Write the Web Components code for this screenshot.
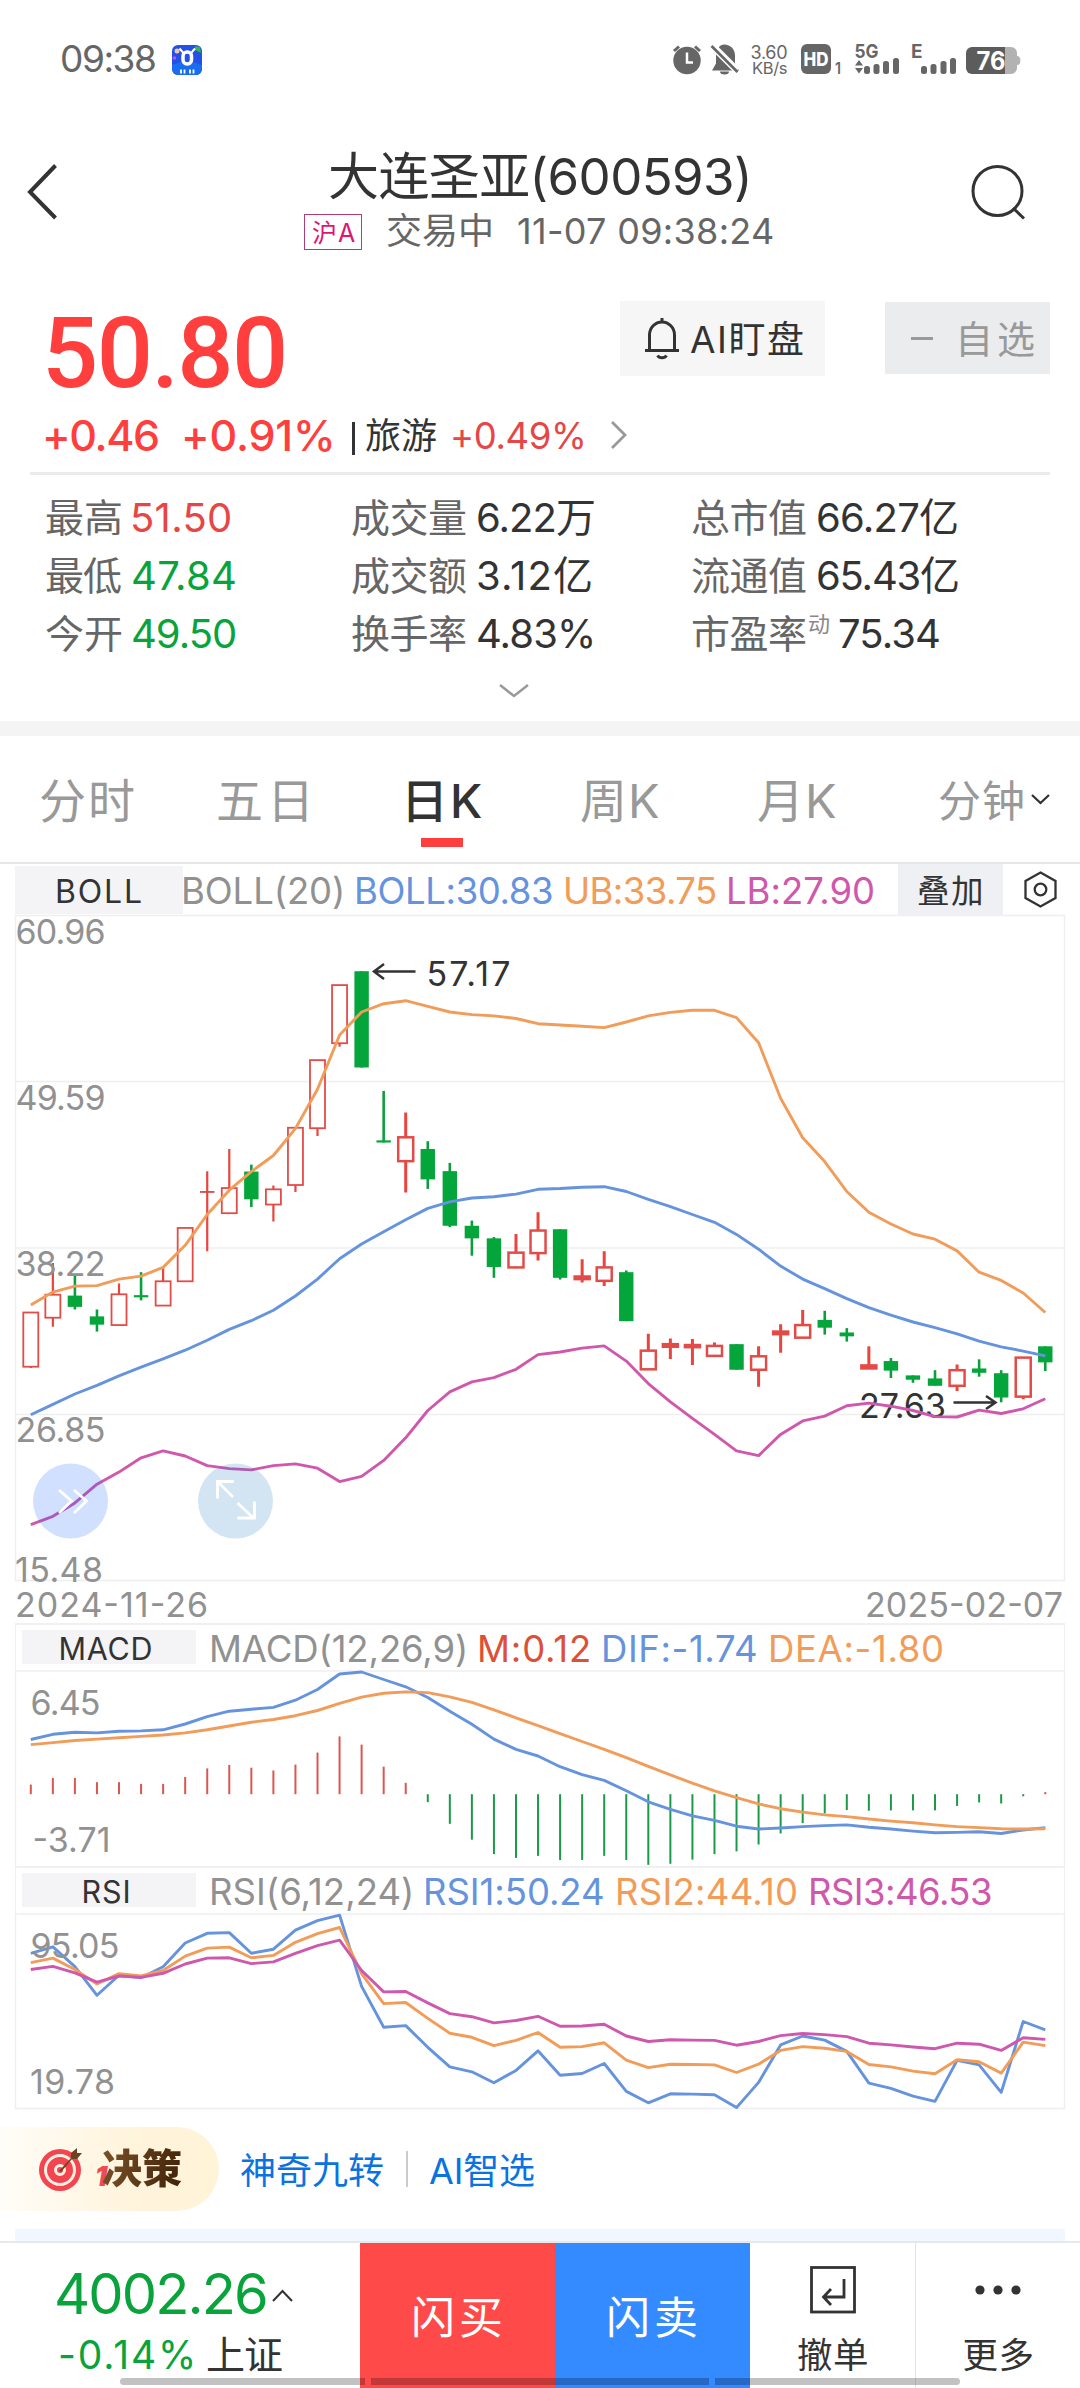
<!DOCTYPE html>
<html lang="zh-CN">
<head>
  <meta charset="UTF-8">
  <title>大连圣亚(600593)</title>
  <style>
    :root {
      --text: #333;
      --text-secondary: #666;
      --text-muted: #919191;
      --up: #ff3e3e;
      --down: #09a33c;
      --blue: #6593dd;
      --orange: #f19c59;
      --pink: #cf58ad;
    }

    body {
      margin: 0;
      width: 1080px;
      height: 2388px;
      overflow: hidden;
      background: #fff;
      color: var(--text);
      font-family: Inter, "Noto Sans CJK SC", sans-serif;
    }
  </style>
</head>
<body>
  <status-bar></status-bar>
  <stock-header></stock-header>
  <quote-summary></quote-summary>
  <quote-stats></quote-stats>
  <period-tabs></period-tabs>
  <boll-legend></boll-legend>
  <kline-chart></kline-chart>
  <indicator-header name="MACD" name-width="91">
    <fit-text w="253" size="36.5" style="color: var(--text-muted)">MACD(12,26,9)</fit-text>
    <fit-text w="109" size="36.5" style="color: #dd5038">M:0.12</fit-text>
    <fit-text w="152" size="36.5" style="color: var(--blue)">DIF:-1.74</fit-text>
    <fit-text w="171" size="36.5" style="color: var(--orange)">DEA:-1.80</fit-text>
  </indicator-header>
  <macd-chart></macd-chart>
  <indicator-header name="RSI" name-width="45">
    <fit-text w="199" size="36.5" style="color: var(--text-muted)">RSI(6,12,24)</fit-text>
    <fit-text w="177" size="36.5" style="color: var(--blue)">RSI1:50.24</fit-text>
    <fit-text w="178" size="36.5" style="color: var(--orange)">RSI2:44.10</fit-text>
    <fit-text w="180" size="36.5" style="color: var(--pink)">RSI3:46.53</fit-text>
  </indicator-header>
  <rsi-chart></rsi-chart>
  <decision-strip></decision-strip>
  <trade-bar></trade-bar>

  <script>
    const measure = document.createElement('canvas').getContext('2d');

    // Text whose glyphs fill exactly `w` pixels
    class FitText extends HTMLElement {
      constructor() {
        super();
        this.attachShadow({ mode: 'open' });
        this.shadowRoot.innerHTML = `
          <style>
            :host { display: block; flex: none; white-space: nowrap; line-height: 1.2; }
          </style>
          <slot></slot>
        `;
      }

      connectedCallback() {
        const text = this.textContent;
        const width = Number(this.getAttribute('w'));
        const size = this.getAttribute('size');
        const weight = this.getAttribute('weight') || 400;
        const family = `${this.getAttribute('font') || 'Inter'}, "Noto Sans CJK SC", sans-serif`;
        measure.font = `${weight} ${size}px ${family}`;
        const box = measure.measureText(text);
        const ink = box.actualBoundingBoxLeft + box.actualBoundingBoxRight;
        const count = [...text].length - 1;
        this.style.fontFamily = family;
        this.style.fontSize = `${size}px`;
        this.style.fontWeight = weight;
        this.style.width = `${width}px`;
        this.style.textIndent = `${box.actualBoundingBoxLeft}px`;
        if (count > 0) this.style.letterSpacing = `${(width - ink) / count}px`;
      }
    }

    class StatusBar extends HTMLElement {
      constructor() {
        super();
        this.attachShadow({ mode: 'open' });
        this.shadowRoot.innerHTML = `
          <style>
            :host { display: flex; align-items: center; height: 119px; color: var(--text-secondary); }
            .time { margin-left: 62px; }
            .app { margin-left: 17px; }
            .icons { margin-left: 458px; }
          </style>
          <fit-text class="time" w="93" size="37">09:38</fit-text>
          <svg class="app" width="30" height="30" viewBox="0 0 30 30">
            <rect width="30" height="30" rx="6" fill="#2450e8"/>
            <path d="M0 20Q15 13 30 20V24A6 6 0 0 1 24 30H6A6 6 0 0 1 0 24Z" fill="#1b6df0"/>
            <circle cx="5" cy="6" r="2.5" fill="#e8c9b0"/>
            <circle cx="2.5" cy="13" r="1.8" fill="#c155e0"/>
            <path d="M23 1l5 1 1 6-6-3z" fill="#35b44a"/>
            <rect x="11" y="7" width="8.5" height="12" rx="4" fill="none" stroke="#fff" stroke-width="3.5"/>
            <path d="M7.500 3.500l3.500 4M23 3.500l-3.500 4" stroke="#fff" stroke-width="2"/>
            <path d="M9 24.500v4M12.500 24.500v4M18 24.500v4M21.500 24.500v4" stroke="#fff" stroke-width="1.800"/>
          </svg>
          <svg class="icons" width="370" height="60" viewBox="0 0 370 60" fill="#666" font-family='Inter'>
            <circle cx="27" cy="30.500" r="13.700"/>
            <path d="M14 21l5-4.500M40 21l-5-4.500" stroke="#666" stroke-width="3"/>
            <path d="M27 22.500v10h6" fill="none" stroke="#fff" stroke-width="2.500"/>
            <path d="M64 14.500c7 0 11 5 11 11v8l4 7h-27l4-7v-9c1-6 4-10 8-10zM60 41.500h9a4.500 3 0 0 1-9 0z"/>
            <path d="M50 13.500l27 27" stroke="#fff" stroke-width="7"/>
            <path d="M51.500 16l26 26" stroke="#666" stroke-width="2.600"/>
            <text x="90.500" y="28.500" font-size="18" textLength="37">3.60</text>
            <text x="92" y="44.300" font-size="16.500" textLength="35.500">KB/s</text>
            <rect x="141" y="14" width="30" height="30" rx="6"/>
            <text x="143.500" y="36" font-size="18.500" font-weight="800" textLength="25" lengthAdjust="spacingAndGlyphs" fill="#fff">HD</text>
            <text x="175" y="43.500" font-size="16" font-weight="600" textLength="6" lengthAdjust="spacingAndGlyphs">1</text>
            <text x="194.500" y="28" font-size="19" font-weight="700" textLength="24" lengthAdjust="spacingAndGlyphs">5G</text>
            <path d="M195 35.500l4-5.500 4 5.500zM195 38l4 5.500 4-5.500z"/>
            <rect x="204" y="36" width="6" height="8" rx="2.500"/>
            <rect x="213.500" y="34" width="6" height="10" rx="2.500"/>
            <rect x="223" y="31" width="6" height="13" rx="2.500"/>
            <rect x="233" y="28" width="6" height="16" rx="2.500"/>
            <text x="251" y="28" font-size="19" font-weight="700">E</text>
            <rect x="261" y="36" width="6" height="8" rx="2.500"/>
            <rect x="270.500" y="34" width="6" height="10" rx="2.500"/>
            <rect x="280.500" y="31" width="6" height="13" rx="2.500"/>
            <rect x="290" y="28" width="6" height="16" rx="2.500"/>
            <path d="M345 17h6a6 6 0 0 1 6 6v3a3 4 0 0 1 0 9v3a6 6 0 0 1-6 6h-6z" fill="#b2b2b2"/>
            <path d="M345 17h-33a6 6 0 0 0-6 6v15a6 6 0 0 0 6 6h33z" fill="#5c5c5c"/>
            <text x="316.500" y="40" font-size="25" font-weight="700" textLength="29" lengthAdjust="spacingAndGlyphs" fill="#fff">76</text>
          </svg>
        `;
      }
    }

    class StockHeader extends HTMLElement {
      constructor() {
        super();
        this.attachShadow({ mode: 'open' });
        this.shadowRoot.innerHTML = `
          <style>
            :host { display: flex; height: 161px; }
            svg { flex: none; fill: none; stroke: var(--text); }
            .center { width: 480px; padding-top: 25px; }
            .title, .sub { display: flex; align-items: center; }
            .title { height: 65px; padding-left: 30px; }
            .sub { height: 45px; padding-left: 4px; color: var(--text-secondary); }
            .badge {
              box-sizing: border-box;
              width: 58px;
              height: 36px;
              border: 1.5px solid #b23a78;
              padding: 3px 0 0 7px;
              display: flex;
              align-items: center;
              color: #dc1673;
            }
          </style>
          <svg width="300" height="161"><path d="M55.500 46.500L30 73l25.500 26" stroke-width="4"/></svg>
          <div class="center">
            <div class="title"><fit-text w="418" size="51">大连圣亚(600593)</fit-text></div>
            <div class="sub">
              <div class="badge"><fit-text w="43" size="25">沪A</fit-text></div>
              <fit-text w="104" size="36" style="margin-left: 25px">交易中</fit-text>
              <fit-text w="255" size="36" style="margin-left: 27px">11-07 09:38:24</fit-text>
            </div>
          </div>
          <svg width="300" height="161" stroke-width="3"><circle cx="217.500" cy="72" r="24.500"/><path d="M233 89l11 10.500"/></svg>
        `;
      }
    }

    class QuoteSummary extends HTMLElement {
      constructor() {
        super();
        this.attachShadow({ mode: 'open' });
        this.shadowRoot.innerHTML = `
          <style>
            :host { display: block; }
            .top { display: flex; height: 115px; align-items: flex-start; }
            .price { margin: 36.5px 0 0 48px; line-height: 72px; color: var(--up); }
            .btn { display: flex; align-items: center; box-sizing: border-box; }
            .watch { margin: 21px 0 0 336px; width: 205px; height: 75px; background: #f6f6f6; padding-left: 25px; }
            .fav { margin: 22px 0 0 60px; width: 165px; height: 72px; background: #ebecee; padding-left: 26px; color: #999; }
            .fav i { width: 22px; height: 3px; background: #999; margin-right: 28px; }
            .change {
              box-sizing: border-box;
              display: flex;
              align-items: center;
              height: 80px;
              margin: 0 30px;
              padding: 4px 0 0 16px;
              border-bottom: 3px solid #e9ebee;
              color: var(--up);
            }
            .bar { width: 2.5px; height: 33px; background: var(--text); margin: 5px 11.5px 0 20px; }
          </style>
          <div class="top">
            <fit-text class="price" w="236" size="99" weight="500" font="Roboto">50.80</fit-text>
            <div class="btn watch">
              <svg width="34" height="42" viewBox="0 0 34 42" fill="none" stroke="#333" stroke-width="3">
                <path d="M17 0v4M4.500 31.500V17a12.500 13 0 0 1 25 0v14.500M0 32.500h34"/>
                <path d="M12.500 37.500a5 4 0 0 0 9 0"/>
              </svg>
              <fit-text w="113" size="37" style="margin: 3px 0 0 11px">AI盯盘</fit-text>
            </div>
            <div class="btn fav"><i></i><fit-text w="73" size="38" style="margin-top: 3px">自选</fit-text></div>
          </div>
          <div class="change">
            <fit-text w="112" size="43" weight="500">+0.46</fit-text>
            <fit-text w="147" size="43" weight="500" style="margin-left: 27px">+0.91%</fit-text>
            <div class="bar"></div>
            <fit-text w="70" size="36" style="margin-top: 2px; color: var(--text)">旅游</fit-text>
            <fit-text w="130" size="36.5" style="margin: 3px 0 0 17px; color: #e64646">+0.49%</fit-text>
            <svg width="17" height="28" style="margin: -2px 0 0 27px" fill="none" stroke="#999" stroke-width="2.800"><path d="M2 1l13 13L2 27"/></svg>
          </div>
        `;
      }
    }

    class QuoteStats extends HTMLElement {
      constructor() {
        super();
        this.attachShadow({ mode: 'open' });
        const rows = [
          ['最高', 75, '51.50', 97, '#e64646'], ['成交量', 114, '6.22万', 116], ['总市值', 114, '66.27亿', 139],
          ['最低', 75, '47.84', 102, '#09a33c'], ['成交额', 114, '3.12亿', 113], ['流通值', 114, '65.43亿', 140],
          ['今开', 75, '49.50', 102, '#09a33c'], ['换手率', 114, '4.83%', 114], ['市盈率', 114, '75.34', 100]
        ];
        this.shadowRoot.innerHTML = `
          <style>
            :host { box-sizing: border-box; display: block; height: 261px; border-bottom: 15px solid #f4f4f4; }
            .grid { display: grid; grid-template: repeat(3, 58px) / 306px 340px 1fr; padding: 14px 0 0 46px; }
            .cell { display: flex; align-items: center; }
            .label { color: var(--text-secondary); margin: 1px 12px 0 0; }
            .mark { color: #888; margin: -20px 9px 0 -9px; }
            .more { display: block; margin: 21px 0 0 499px; }
          </style>
          <div class="grid">
            ${rows.map(([label, lw, value, vw, color = '#333']) => `
              <div class="cell">
                <fit-text class="label" w="${lw}" size="39">${label}</fit-text>
                ${label === '市盈率' ? '<fit-text class="mark" w="21" size="22">动</fit-text>' : ''}
                <fit-text w="${vw}" size="40" style="color: ${color}">${value}</fit-text>
              </div>`).join('')}
          </div>
          <svg class="more" width="30" height="14" fill="none" stroke="#999" stroke-width="2.500"><path d="M1 1l14 11L29 1"/></svg>
        `;
      }
    }

    class PeriodTabs extends HTMLElement {
      constructor() {
        super();
        this.attachShadow({ mode: 'open' });
        this.shadowRoot.innerHTML = `
          <style>
            :host {
              box-sizing: border-box;
              display: flex;
              height: 128px;
              padding: 41px 0 0 41px;
              border-bottom: 2px solid #e6e6e6;
              color: #999;
            }
            fit-text { line-height: 48px; }
            .active { color: var(--text); }
            .active i { display: block; width: 42px; height: 9px; margin: 13px 0 0 13px; background: var(--up); }
            svg { margin: 17px 0 0 7px; }
          </style>
          <fit-text w="93" size="47">分时</fit-text>
          <fit-text w="89" size="47" style="margin-left: 84px">五日</fit-text>
          <div class="active" style="margin-left: 101px"><fit-text w="74" size="47" weight="500">日K</fit-text><i></i></div>
          <fit-text w="78" size="47" style="margin-left: 99px">周K</fit-text>
          <fit-text w="78" size="47" style="margin-left: 99px">月K</fit-text>
          <fit-text w="84" size="43" style="margin-left: 103px">分钟</fit-text>
          <svg width="21" height="12" fill="none" stroke="#333" stroke-width="2.300"><path d="M2 1l8.500 8L19 1"/></svg>
        `;
      }
    }

    class BollLegend extends HTMLElement {
      constructor() {
        super();
        this.attachShadow({ mode: 'open' });
        this.shadowRoot.innerHTML = `
          <style>
            :host { display: flex; height: 51px; align-items: center; padding-left: 15px; }
            .name, .overlay { display: flex; align-items: center; box-sizing: border-box; }
            .name { width: 168px; height: 48px; padding: 6px 0 0 42px; background: #f4f4f7; }
            .overlay { width: 105px; height: 51px; padding: 3px 0 0 20px; margin: 0 21px 0 25px; background: #eff0f3; }
            :host > fit-text { margin-top: 5px; }
          </style>
          <div class="name"><fit-text w="84" size="32">BOLL</fit-text></div>
          <fit-text w="158" size="36.5" style="margin-left: 1px; color: var(--text-muted)">BOLL(20)</fit-text>
          <fit-text w="195" size="36.5" style="margin-left: 15px; color: var(--blue)">BOLL:30.83</fit-text>
          <fit-text w="149" size="36.5" style="margin-left: 14px; color: var(--orange)">UB:33.75</fit-text>
          <fit-text w="144" size="36.5" style="margin-left: 14px; color: var(--pink)">LB:27.90</fit-text>
          <div class="overlay"><fit-text w="63" size="32.5">叠加</fit-text></div>
          <svg width="33" height="37" viewBox="0 0 33 37" fill="none" stroke="#333" stroke-width="2.300">
            <path d="M16.500 1.500L31.500 10v17L16.500 35.500 1.500 27V10z"/><circle cx="16.500" cy="18.500" r="5.800"/>
          </svg>
        `;
        this.shadowRoot.querySelectorAll(':host > fit-text').forEach((el) => { el.style.marginTop = '5px'; });
      }
    }

    class IndicatorHeader extends HTMLElement {
      constructor() {
        super();
        this.attachShadow({ mode: 'open' });
      }

      connectedCallback() {
        this.shadowRoot.innerHTML = `
          <style>
            :host {
              box-sizing: border-box;
              display: flex;
              align-items: center;
              height: 48px;
              margin: 0 15px;
              padding-left: 6px;
              gap: 15px;
              border: solid #f0f0f2;
              border-width: 2px 1px 0;
            }
            .name {
              display: flex;
              justify-content: center;
              align-items: center;
              box-sizing: border-box;
              width: 174px;
              height: 34px;
              padding: 4px 6px 0 0;
              margin: 0 1px 2px 0;
              background: #f4f4f7;
            }
            ::slotted(fit-text) { margin-top: 4px; }
          </style>
          <div class="name"><fit-text w="${this.getAttribute('name-width')}" size="30.5">${this.getAttribute('name')}</fit-text></div>
          <slot></slot>
        `;
      }
    }

    // 47 trading days, one slot each
    const dayX = (i) => 30.8 + 22.054 * i;

    const polyline = (values, color, toY) => {
      const points = values.map((v, i) => `${dayX(i).toFixed(1)},${toY(v).toFixed(1)}`).join(' ');
      return `<polyline points="${points}" fill="none" stroke="${color}" stroke-width="2.9" stroke-linejoin="round"/>`;
    };

    const svgText = (x, y, length, text, color = '#919191', size = 34) =>
      `<text x="${x}" y="${y}" font-size="${size}" textLength="${length}" fill="${color}">${text}</text>`;

    const CHART_STYLE = `
      <style>
        :host { display: block; }
        svg { display: block; overflow: visible; font-family: Inter, sans-serif; }
      </style>`;

    // [direction, body top, body bottom, high, low]
    const CANDLES = [
      ['r', 859, 984, 859, 987], ['r', 818, 871, 745, 892], ['g', 820, 846, 772, 852], ['g', 868, 887, 852, 903],
      ['r', 817, 888, 792, 888], ['g', 819, 824, 766, 831], ['r', 787, 843, 756, 843], ['r', 664, 787, 664, 787],
      ['r', 581, 581, 533, 718], ['r', 572, 630, 482, 630], ['g', 534, 598, 518, 616], ['r', 575, 610, 566, 649],
      ['r', 433, 565, 433, 581], ['r', 277, 434, 277, 452], ['r', 104, 238, 104, 246], ['g', 72, 294, 72, 294],
      ['g', 462, 467, 348, 467], ['r', 455, 510, 398, 582], ['g', 482, 552, 464, 574], ['g', 533, 659, 514, 662],
      ['g', 659, 688, 647, 728], ['g', 688, 754, 685, 779], ['r', 721, 755, 678, 757], ['r', 670, 722, 628, 739],
      ['g', 667, 779, 667, 783], ['r', 776, 782, 736, 790], ['r', 755, 786, 718, 798], ['g', 766, 879, 762, 879],
      ['r', 947, 990, 908, 990], ['r', 932, 938, 919, 966], ['r', 934, 939, 920, 980], ['r', 936, 959, 928, 959],
      ['g', 932, 991, 932, 991], ['r', 960, 991, 937, 1030], ['r', 903, 909, 886, 952], ['r', 888, 917, 853, 917],
      ['g', 876, 894, 855, 910], ['g', 905, 914, 895, 926], ['r', 981, 988, 937, 988], ['g', 971, 993, 964, 1010],
      ['g', 1004, 1014, 1004, 1021], ['g', 1011, 1028, 992, 1028], ['r', 992, 1028, 979, 1040], ['g', 988, 998, 967, 1007],
      ['g', 999, 1055, 992, 1066], ['r', 963, 1053, 963, 1059], ['g', 937, 974, 937, 994]
    ];
    const UPPER = [842, 812, 798, 797, 782, 775, 755, 704, 633, 577, 534, 497, 435, 344, 219, 166, 147, 140, 153, 166, 172, 175, 181, 193, 196, 199, 202, 189, 175, 167, 162, 162, 179, 237, 365, 456, 511, 580, 628, 655, 678, 690, 717, 766, 785, 814, 859];
    const MIDDLE = [1095, 1071, 1047, 1027, 1005, 985, 966, 946, 923, 898, 878, 854, 821, 782, 735, 701, 673, 645, 619, 604, 595, 592, 586, 575, 573, 570, 569, 580, 598, 615, 633, 651, 679, 713, 752, 782, 804, 827, 848, 865, 881, 894, 908, 925, 938, 948, 959];
    const LOWER = [1348, 1329, 1298, 1255, 1227, 1194, 1178, 1190, 1212, 1219, 1222, 1212, 1208, 1218, 1249, 1237, 1200, 1148, 1085, 1042, 1019, 1009, 990, 956, 950, 941, 936, 971, 1023, 1065, 1103, 1140, 1178, 1189, 1140, 1109, 1098, 1074, 1068, 1075, 1085, 1099, 1100, 1084, 1092, 1081, 1058];

    class KlineChart extends HTMLElement {
      constructor() {
        super();
        this.attachShadow({ mode: 'open' });
        const toY = (v) => v / 2.306 + 25;
        const candles = CANDLES.map(([dir, top, bottom, high, low], i) => {
          const x = dayX(i);
          const [t, b, h, l] = [top, bottom, high, low].map(toY);
          if (dir === 'g') {
            return `<path d="M${x} ${h}V${l}" stroke="#0a9f3d" stroke-width="2.600"/>
              <rect x="${x - 7.2}" y="${t}" width="14.400" height="${b - t}" fill="#04a53a"/>`;
          }
          const width = i < 16 ? 1.8 : 2.5;
          const line = `<path d="M${x} ${h}V${t}M${x} ${b}V${l}" stroke="#e8453f" stroke-width="${i < 16 ? 2.2 : 3}"/>`;
          if (t === b) return `${line}<path d="M${x - 7.2} ${t}h14.400" stroke="#c94f4b" stroke-width="1.800"/>`;
          return `${line}<rect x="${x - 7.5}" y="${t}" width="15" height="${b - t}" fill="${b - t < 4 ? '#ff3e3e' : '#fff'}" stroke="#e24c48" stroke-width="${width}"/>`;
        }).join('');

        this.shadowRoot.innerHTML = `
          ${CHART_STYLE}
          <svg width="1080" height="708">
            <path d="M15.500 .5H1064.500V665.500H15.500zM15 166.500H1064M15 333H1064M15 499.500H1064" fill="none" stroke="#efeff1" stroke-width="1.500"/>
            ${candles}
            ${svgText(859, 502.5, 87, '27.63', '#333')}
            <path d="M953.500 487.500H995M986 481l9.500 6.500-9.500 6.500" fill="none" stroke="#333" stroke-width="2.500"/>
            ${polyline(UPPER, '#f19c59', toY)}
            ${polyline(MIDDLE, '#6593dd', toY)}
            ${polyline(LOWER, '#cf58ad', toY)}
            ${svgText(426.5, 70.5, 84, '57.17', '#333')}
            <path d="M415.500 56.500H375M384 49l-10 7.500 10 7.500" fill="none" stroke="#333" stroke-width="2.500"/>
            ${svgText(15.5, 28.5, 90, '60.96')}
            ${svgText(15.5, 194.5, 90, '49.59')}
            ${svgText(15.5, 361, 90, '38.22')}
            ${svgText(15.5, 527, 90, '26.85')}
            ${svgText(15, 667, 88, '15.48')}
            ${svgText(15, 701.5, 193, '2024-11-26')}
            ${svgText(865, 701.5, 198, '2025-02-07')}
            <circle cx="70.500" cy="586" r="37.500" fill="rgba(25, 100, 255, .2)"/>
            <circle cx="235.500" cy="586" r="37.500" fill="rgba(35, 120, 195, .2)"/>
            <g fill="none" stroke="#fff" stroke-width="2.800">
              <path d="M59 575l12.500 11L59 598M74 575l12.500 11L74 598"/>
              <path d="M233 582l-15.500-15.500M217.500 583.500v-17h16.500M237.500 588l16 15M254.500 586.500v16.500h-17"/>
            </g>
          </svg>
        `;
      }
    }

    const MACD_BARS = [536, 517, 517, 529, 529, 534, 534, 514, 489, 479, 487, 495, 478, 443, 396, 420, 484, 531, 587, 650, 696, 738, 749, 743, 755, 755, 743, 755, 769, 766, 754, 738, 730, 710, 678, 648, 620, 610, 612, 611, 611, 611, 598, 588, 591, 570, 558];
    const DIF = [405, 390, 384, 386, 381, 380, 377, 360, 339, 323, 317, 312, 291, 260, 215, 209, 231, 252, 283, 323, 361, 404, 434, 453, 484, 507, 524, 554, 586, 608, 627, 640, 657, 665, 662, 658, 655, 653, 660, 665, 671, 676, 675, 673, 678, 668, 661];
    const DEA = [420, 414, 408, 404, 400, 396, 392, 386, 377, 366, 355, 347, 336, 321, 300, 282, 271, 267, 269, 281, 297, 319, 342, 365, 388, 411, 434, 458, 483, 508, 532, 554, 574, 592, 606, 616, 624, 629, 636, 642, 647, 653, 658, 661, 664, 665, 664];

    class MacdChart extends HTMLElement {
      constructor() {
        super();
        this.attachShadow({ mode: 'open' });
        const toY = (v) => v / 2.904 - 71;
        const bars = MACD_BARS.map((v, i) =>
          `<path d="M${dayX(i)} ${toY(564)}V${toY(v)}" stroke="${v < 564 ? '#dc5550' : '#1a9a48'}" stroke-width="2"/>`).join('');
        this.shadowRoot.innerHTML = `
          ${CHART_STYLE}
          <svg width="1080" height="195">
            <path d="M15.500 195V0M1064.500 0V195M15 0H1064" fill="none" stroke="#efeff1" stroke-width="1.500"/>
            ${bars}
            ${polyline(DIF, '#6593dd', toY)}
            ${polyline(DEA, '#f19c59', toY)}
            ${svgText(30.5, 43.5, 70, '6.45')}
            ${svgText(32.5, 180.5, 78, '-3.71')}
          </svg>
        `;
      }
    }

    const RSI1 = [1026, 1007, 1065, 1148, 1090, 1097, 1065, 996, 968, 966, 1026, 1014, 959, 931, 915, 1122, 1241, 1236, 1299, 1356, 1370, 1402, 1366, 1309, 1380, 1375, 1346, 1427, 1460, 1434, 1435, 1437, 1474, 1401, 1292, 1266, 1278, 1311, 1403, 1418, 1441, 1456, 1337, 1350, 1430, 1224, 1248];
    const RSI2 = [1053, 1040, 1073, 1115, 1085, 1092, 1076, 1034, 1011, 1008, 1039, 1032, 994, 969, 951, 1085, 1172, 1169, 1215, 1258, 1270, 1294, 1279, 1256, 1299, 1297, 1286, 1336, 1358, 1348, 1349, 1350, 1372, 1348, 1308, 1297, 1302, 1311, 1349, 1356, 1368, 1376, 1335, 1341, 1374, 1284, 1294];
    const RSI3 = [1073, 1064, 1083, 1110, 1092, 1096, 1084, 1057, 1040, 1039, 1056, 1051, 1026, 1004, 988, 1076, 1138, 1137, 1170, 1201, 1210, 1228, 1221, 1209, 1238, 1237, 1232, 1266, 1282, 1277, 1278, 1279, 1293, 1282, 1265, 1259, 1262, 1268, 1287, 1292, 1298, 1303, 1287, 1290, 1308, 1271, 1276];

    class RsiChart extends HTMLElement {
      constructor() {
        super();
        this.attachShadow({ mode: 'open' });
        const toY = (v) => v / 2.904 - 314;
        this.shadowRoot.innerHTML = `
          ${CHART_STYLE}
          <svg width="1080" height="195">
            <path d="M15.500 194.500V0M1064.500 0V194.500M15 0H1064M15 194.500H1065" fill="none" stroke="#efeff1" stroke-width="1.500"/>
            ${polyline(RSI1, '#6593dd', toY)}
            ${polyline(RSI2, '#f19c59', toY)}
            ${polyline(RSI3, '#cf58ad', toY)}
            ${svgText(30.5, 43.5, 89, '95.05')}
            ${svgText(30, 180, 85, '19.78')}
          </svg>
        `;
      }
    }

    class DecisionStrip extends HTMLElement {
      constructor() {
        super();
        this.attachShadow({ mode: 'open' });
        this.shadowRoot.innerHTML = `
          <style>
            :host { box-sizing: border-box; display: block; height: 132px; padding-top: 18px; }
            .row { display: flex; align-items: center; height: 84px; color: #0a73e0; }
            .pill {
              box-sizing: border-box;
              display: flex;
              align-items: center;
              width: 219px;
              height: 84px;
              padding-left: 39px;
              border-radius: 0 42px 42px 0;
              background: linear-gradient(90deg, #fffdf8, #fff4dc 60%, #fff3d8);
            }
            .one { margin: 16px -6px 0 13px; font-style: italic; color: #ee4a55; }
            .logo { color: transparent; background: linear-gradient(100deg, #7a5228, #3f2208); background-clip: text; -webkit-background-clip: text; }
            .row > i { width: 2px; height: 36px; margin: 0 21px 0 23px; background: #ccc; }
            .hint { height: 12px; margin: 18px 15px 0; background: #f0f7ff; }
          </style>
          <div class="row">
            <div class="pill">
              <svg width="44" height="44" viewBox="0 0 44 44">
                <circle cx="21" cy="23" r="21" fill="#f2454f"/>
                <circle cx="21" cy="23" r="14.500" fill="none" stroke="#fff1e2" stroke-width="3"/>
                <circle cx="21" cy="23" r="4.500" fill="#f2454f" stroke="#fff1e2" stroke-width="3"/>
                <path d="M20 24L32 11V6l6-5v5h5l-5 6h-5L22 25z" fill="#6b4423"/>
              </svg>
              <fit-text class="one" w="12" size="27" weight="900">1</fit-text>
              <fit-text class="logo" w="80" size="40" weight="900">决策</fit-text>
            </div>
            <fit-text w="142" size="36" style="margin: 5px 0 0 22px">神奇九转</fit-text>
            <i></i>
            <fit-text w="105" size="36" style="margin-top: 5px">AI智选</fit-text>
          </div>
          <div class="hint"></div>
        `;
      }
    }

    class TradeBar extends HTMLElement {
      constructor() {
        super();
        this.attachShadow({ mode: 'open' });
        this.shadowRoot.innerHTML = `
          <style>
            :host { position: relative; box-sizing: border-box; display: flex; height: 147px; border-top: 2px solid #e6e8ea; }
            .index { box-sizing: border-box; width: 360px; padding: 22px 0 0 57px; color: var(--down); }
            .index div { display: flex; align-items: center; height: 60px; }
            .trade { width: 195px; display: flex; align-items: center; justify-content: center; color: #fff; padding-top: 5px; box-sizing: border-box; }
            .buy { background: #ff4a4a; }
            .sell { background: #348bff; }
            .action { box-sizing: border-box; width: 165px; display: flex; flex-direction: column; align-items: center; }
            .action + .action { border-left: 1.5px solid #e4e4e4; }
            .action svg { height: 92px; }
            .action fit-text { line-height: 42px; }
            .home { position: absolute; left: 120px; bottom: 3px; width: 840px; height: 7px; display: flex; gap: 6px; }
            .home i { background: rgba(0, 0, 0, .24); flex: 245; }
            .home i:nth-child(2) { flex: 338; }
            .home i:first-child { border-radius: 4px 0 0 4px; }
            .home i:last-child { border-radius: 0 4px 4px 0; }
          </style>
          <div class="index">
            <div>
              <fit-text w="209" size="56">4002.26</fit-text>
              <svg width="23" height="13" style="margin-left: 5px" fill="none" stroke="#333" stroke-width="2"><path d="M2 12l9.500-10L21 12"/></svg>
            </div>
            <div>
              <fit-text w="132" size="39" style="margin-left: 3px">-0.14%</fit-text>
              <fit-text w="75" size="39" style="margin-left: 15px; color: var(--text)">上证</fit-text>
            </div>
          </div>
          <div class="trade buy"><fit-text w="87" size="44">闪买</fit-text></div>
          <div class="trade sell"><fit-text w="87" size="44">闪卖</fit-text></div>
          <div class="action">
            <svg width="60" viewBox="0 0 60 92" fill="none" stroke="#333" stroke-width="2.800">
              <rect x="8.500" y="24.500" width="43" height="44.500"/>
              <path d="M41 36v18H21M28 46l-7.500 8 7.500 8"/>
            </svg>
            <fit-text w="69" size="35.5">撤单</fit-text>
          </div>
          <div class="action">
            <svg width="60" viewBox="0 0 60 92" fill="#333">
              <circle cx="12" cy="47" r="4.600"/><circle cx="30" cy="47" r="4.600"/><circle cx="48" cy="47" r="4.600"/>
            </svg>
            <fit-text w="69" size="35.5">更多</fit-text>
          </div>
          <div class="home"><i></i><i></i><i></i></div>
        `;
      }
    }

    customElements.define('fit-text', FitText);
    customElements.define('status-bar', StatusBar);
    customElements.define('stock-header', StockHeader);
    customElements.define('quote-summary', QuoteSummary);
    customElements.define('quote-stats', QuoteStats);
    customElements.define('period-tabs', PeriodTabs);
    customElements.define('boll-legend', BollLegend);
    customElements.define('indicator-header', IndicatorHeader);
    customElements.define('kline-chart', KlineChart);
    customElements.define('macd-chart', MacdChart);
    customElements.define('rsi-chart', RsiChart);
    customElements.define('decision-strip', DecisionStrip);
    customElements.define('trade-bar', TradeBar);
  </script>
</body>
</html>
